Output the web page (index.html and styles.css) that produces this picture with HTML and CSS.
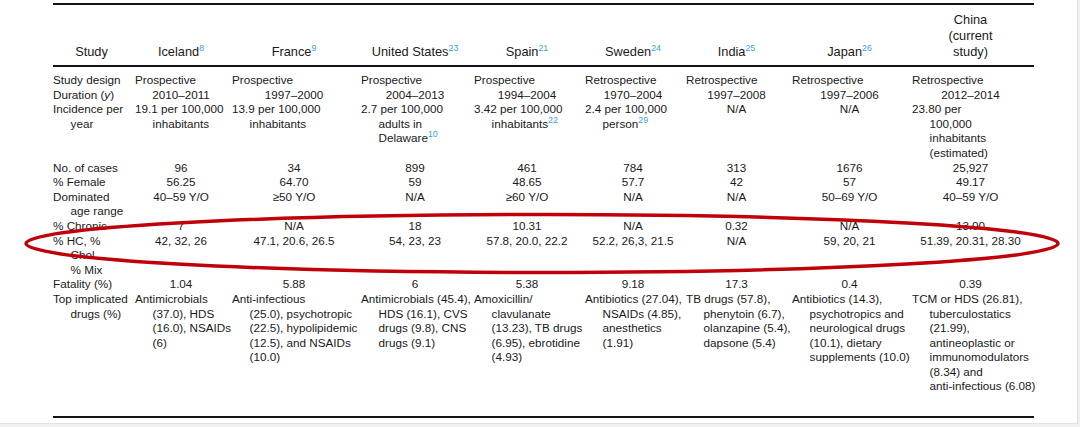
FILE: index.html
```html
<!DOCTYPE html>
<html lang="en">
<head>
<meta charset="utf-8">
<title>Comparison of DILI studies</title>
<link rel="stylesheet" href="styles.css">
</head>
<body>
<div class="page">
  <table class="dili">
    <colgroup>
      <col class="w-study"><col class="w-ice"><col class="w-fra"><col class="w-us"><col class="w-spa"><col class="w-swe"><col class="w-ind"><col class="w-jap"><col class="w-chi">
    </colgroup>
    <thead>
      <tr>
        <th>Study</th>
        <th>Iceland<sup class="ref">8</sup></th>
        <th>France<sup class="ref">9</sup></th>
        <th>United States<sup class="ref">23</sup></th>
        <th>Spain<sup class="ref">21</sup></th>
        <th>Sweden<sup class="ref">24</sup></th>
        <th>India<sup class="ref">25</sup></th>
        <th>Japan<sup class="ref">26</sup></th>
        <th>China<br>(current<br>study)</th>
      </tr>
    </thead>
    <tbody>
      <tr class="first">
        <td class="l">Study design</td>
        <td class="l">Prospective</td>
        <td class="l">Prospective</td>
        <td class="l">Prospective</td>
        <td class="l">Prospective</td>
        <td class="l">Retrospective</td>
        <td class="l">Retrospective</td>
        <td class="l">Retrospective</td>
        <td class="l">Retrospective</td>
      </tr>
      <tr>
        <td class="l">Duration (<i>y</i>)</td>
        <td class="c">2010–2011</td>
        <td class="c">1997–2000</td>
        <td class="c">2004–2013</td>
        <td class="c">1994–2004</td>
        <td class="c">1970–2004</td>
        <td class="c">1997–2008</td>
        <td class="c">1997–2006</td>
        <td class="c">2012–2014</td>
      </tr>
      <tr>
        <td class="l">Incidence per<br>year</td>
        <td class="l">19.1 per 100,000<br>inhabitants</td>
        <td class="l">13.9 per 100,000<br>inhabitants</td>
        <td class="l">2.7 per 100,000<br>adults in<br>Delaware<sup class="ref">10</sup></td>
        <td class="l">3.42 per 100,000<br>inhabitants<sup class="ref">22</sup></td>
        <td class="l">2.4 per 100,000<br>person<sup class="ref">29</sup></td>
        <td class="c">N/A</td>
        <td class="c">N/A</td>
        <td class="l">23.80 per<br>100,000<br>inhabitants<br>(estimated)</td>
      </tr>
      <tr>
        <td class="l">No. of cases</td>
        <td class="c">96</td>
        <td class="c">34</td>
        <td class="c">899</td>
        <td class="c">461</td>
        <td class="c">784</td>
        <td class="c">313</td>
        <td class="c">1676</td>
        <td class="c">25,927</td>
      </tr>
      <tr>
        <td class="l">% Female</td>
        <td class="c">56.25</td>
        <td class="c">64.70</td>
        <td class="c">59</td>
        <td class="c">48.65</td>
        <td class="c">57.7</td>
        <td class="c">42</td>
        <td class="c">57</td>
        <td class="c">49.17</td>
      </tr>
      <tr>
        <td class="l">Dominated<br>age range</td>
        <td class="c">40–59 Y/O</td>
        <td class="c">≥50 Y/O</td>
        <td class="c">N/A</td>
        <td class="c">≥60 Y/O</td>
        <td class="c">N/A</td>
        <td class="c">N/A</td>
        <td class="c">50–69 Y/O</td>
        <td class="c">40–59 Y/O</td>
      </tr>
      <tr>
        <td class="l">% Chronic</td>
        <td class="c">7</td>
        <td class="c">N/A</td>
        <td class="c">18</td>
        <td class="c">10.31</td>
        <td class="c">N/A</td>
        <td class="c">0.32</td>
        <td class="c">N/A</td>
        <td class="c">13.00</td>
      </tr>
      <tr>
        <td class="l">% HC, %<br>Chol<br>% Mix</td>
        <td class="c">42, 32, 26</td>
        <td class="c">47.1, 20.6, 26.5</td>
        <td class="c">54, 23, 23</td>
        <td class="c">57.8, 20.0, 22.2</td>
        <td class="c">52.2, 26,3, 21.5</td>
        <td class="c">N/A</td>
        <td class="c">59, 20, 21</td>
        <td class="c">51.39, 20.31, 28.30</td>
      </tr>
      <tr>
        <td class="l">Fatality (%)</td>
        <td class="c">1.04</td>
        <td class="c">5.88</td>
        <td class="c">6</td>
        <td class="c">5.38</td>
        <td class="c">9.18</td>
        <td class="c">17.3</td>
        <td class="c">0.4</td>
        <td class="c">0.39</td>
      </tr>
      <tr class="last">
        <td class="l">Top implicated<br>drugs (%)</td>
        <td class="l">Antimicrobials<br>(37.0), HDS<br>(16.0), NSAIDs<br>(6)</td>
        <td class="l">Anti-infectious<br>(25.0), psychotropic<br>(22.5), hypolipidemic<br>(12.5), and NSAIDs<br>(10.0)</td>
        <td class="l">Antimicrobials (45.4),<br>HDS (16.1), CVS<br>drugs (9.8), CNS<br>drugs (9.1)</td>
        <td class="l">Amoxicillin/<br>clavulanate<br>(13.23), TB drugs<br>(6.95), ebrotidine<br>(4.93)</td>
        <td class="l">Antibiotics (27.04),<br>NSAIDs (4.85),<br>anesthetics<br>(1.91)</td>
        <td class="l">TB drugs (57.8),<br>phenytoin (6.7),<br>olanzapine (5.4),<br>dapsone (5.4)</td>
        <td class="l">Antibiotics (14.3),<br>psychotropics and<br>neurological drugs<br>(10.1), dietary<br>supplements (10.0)</td>
        <td class="l">TCM or HDS (26.81),<br>tuberculostatics<br>(21.99),<br>antineoplastic or<br>immunomodulators<br>(8.34) and<br>anti-infectious (6.08)</td>
      </tr>
    </tbody>
  </table>
  <svg class="mark" width="1078" height="424" viewBox="0 0 1078 424" aria-hidden="true">
    <ellipse cx="542" cy="243.5" rx="516" ry="29" fill="none" stroke="#bf000b" stroke-width="3.5"/>
  </svg>
</div>
</body>
</html>
```

FILE: styles.css
```css
html {
  background: #f1f1f1;
}

body {
  margin: 0;
  font-family: "Liberation Sans", Arial, sans-serif;
  color: #1a1a1a;
}

.page {
  position: relative;
  width: 1078px;
  height: 424px;
  background: #ffffff;
  box-sizing: border-box;
  padding: 3px 0 0 53px;
  border-right: 1px solid #e2e2e2;
  border-bottom: 1px solid #e2e2e2;
}

.dili {
  border-collapse: separate;
  border-spacing: 0;
  table-layout: fixed;
  width: 981px;
  border-top: 2px solid #141414;
  border-bottom: 2px solid #141414;
}

.w-study { width: 82px; }
.w-ice { width: 97px; }
.w-fra { width: 129px; }
.w-us { width: 113px; }
.w-spa { width: 111px; }
.w-swe { width: 101px; }
.w-ind { width: 106px; }
.w-jap { width: 120px; }
.w-chi { width: 122px; }

.dili th {
  font-weight: normal;
  font-size: 12.8px;
  line-height: 16px;
  text-align: center;
  vertical-align: bottom;
  padding: 7px 5px 5px 0;
  border-bottom: 2px solid #141414;
  white-space: nowrap;
}

.dili td {
  font-size: 11.7px;
  line-height: 14.6px;
  vertical-align: top;
  padding: 0 5px 0 0;
  white-space: nowrap;
}

.dili tr.first td {
  padding-top: 6px;
}

.dili tr.last td {
  padding-bottom: 22px;
}

.dili td.l {
  text-align: left;
  padding-left: 1.5em;
  text-indent: -1.5em;
}

.dili td.c {
  text-align: center;
}

.ref {
  color: #3a9fd6;
  font-size: 8.8px;
  line-height: 0;
  vertical-align: 5px;
}

.mark {
  position: absolute;
  left: 0;
  top: 0;
  pointer-events: none;
}
```
